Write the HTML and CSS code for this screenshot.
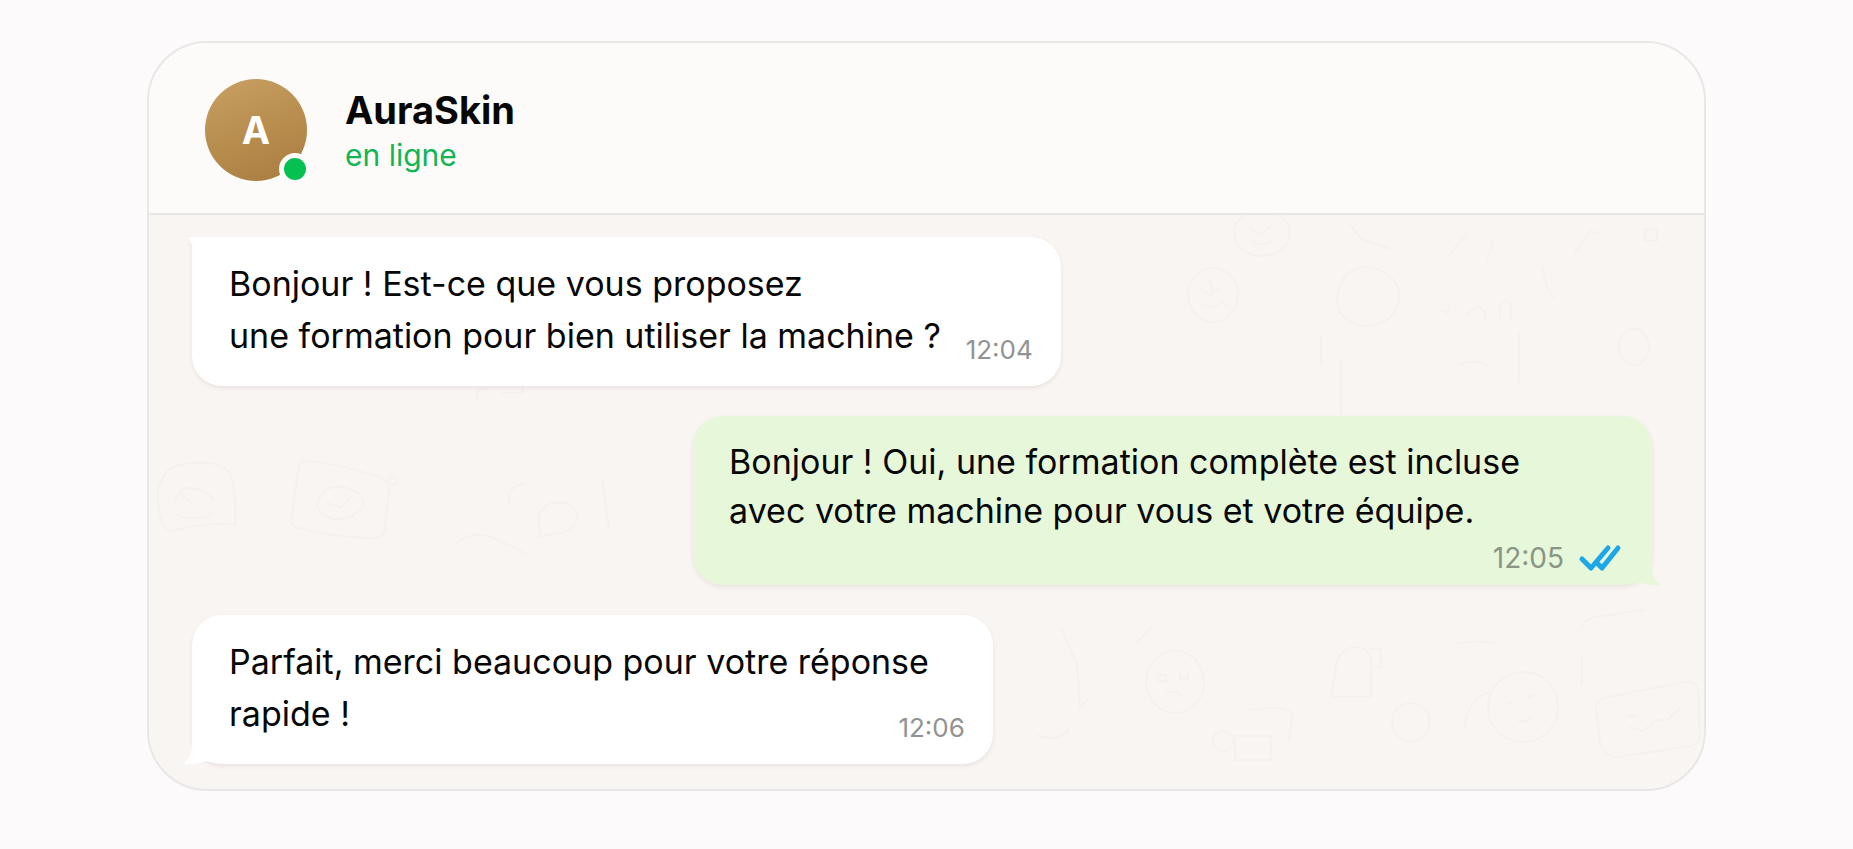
FILE: index.html
```
<!DOCTYPE html>
<html lang="fr">
<head>
    <meta charset="utf-8">
    <meta name="viewport" content="width=device-width, initial-scale=1.0">
    <title>AuraSkin</title>
    <link rel="stylesheet" href="styles.css">
</head>

<body>
    <main class="chat">
        <header class="chat-header">
            <div class="avatar">A<span class="avatar-status"></span></div>
            <div class="contact">
                <h1 class="contact-name">AuraSkin</h1>
                <p class="contact-status">en ligne</p>
            </div>
        </header>

        <section class="messages">
            <!-- wallpaper doodles -->
            <svg class="wallpaper" viewBox="0 0 1555 574" preserveAspectRatio="xMidYMid slice" aria-hidden="true">
                <ellipse cx="1064" cy="80" rx="25" ry="27"/>
                <path d="M1052 74l9 6 12-8M1052 88q10 9 22-2M1060 64l4 12M1072 84l6 8"/>
                <ellipse cx="1113" cy="18" rx="28" ry="23"/>
                <path d="M1100 12l10 8 14-10M1103 26q10 8 22-2"/>
                <path d="M1188 86q2-32 28-34 32 4 34 28 0 28-32 31-28-2-30-25z"/>
                <path d="M1300 40l18-22M1344 26l-6 20M1394 52q2 22 12 32M1425 40l16-24 8 2M1496 14h12v12h-12zM1351 104v-12q6-12 11 0v12"/>
                <path d="M1200 8l12 16 30 10M1290 94l8 4 4-8M1318 100q12-14 18-2v6"/>
                <ellipse cx="1485" cy="132" rx="15" ry="18"/>
                <path d="M1192 145v54M1172 120v30M1370 118v50M1310 150q16-8 30 2"/>
                <path d="M30 250q40-8 52 10 6 22 4 50-30-4-66 7-12-10-11-40 4-24 21-27z"/>
                <path d="M24 290q8-22 20-16 14 0 22 12M28 300q18 8 36-2M30 278l12 10"/>
                <path d="M156 246q30 2 68 14 14 2 16 14l-4 40q-2 10-12 9-34 0-78-11l-4-4 8-58q2-4 6-4z"/>
                <path d="M168 290q4-20 26-18 22 4 20 20-12 14-30 12-14-4-16-14zM178 288l14 4 10-10"/>
                <path d="M392 318q-8-22 10-30 22-4 26 12 0 18-20 18l-18 4zM453 263l7 50M376 268q-22 6-14 22M305 330q20-18 46-4 18 8 28 14"/>
                <path d="M328 184q-2-12 10-10M350 164h24v14h-22M244 262a4 4 0 1 0 .1 0"/>
                <ellipse cx="1026" cy="467" rx="29" ry="31"/>
                <path d="M1009 460h8v6h-8zM1031 458v6h8v-6M1016 479q10-6 16 2"/>
                <path d="M912 412q12 30 16 36l3 44 8-8M888 520q20 8 32-6M986 430l18-20"/>
                <path d="M1074 516a10 10 0 1 0 .1 0M1086 545v-24h36v24zM1100 496q30-8 44 2l-4 28"/>
                <circle cx="1374" cy="492" r="35"/>
                <path d="M1357 490q3-6 8 0M1378 484q6-6 12-2M1368 504q6 6 14-2M1316 513q2-28 24-36"/>
                <path d="M1455 483l80-16q14-2 14 12l2 40q0 10-10 12l-72 11q-14 0-18-14l-4-34q0-9 8-11z"/>
                <path d="M1480 512l14 4 12-10 14-2 12-12M1478 500l10 2"/>
                <path d="M1182 482l6-36q6-14 18-14 14 0 16 14v36zM1220 434h12v18h-8"/>
                <path d="M1432 415q4-14 20-14l44-6M1433 440v30M1305 430q20-6 42-2"/>
                <circle cx="1262" cy="507" r="19"/>
            </svg>

            <article class="bubble bubble-in tail-top">
                <p class="text text-inline">Bonjour ! Est-ce que vous proposez<br>une formation pour bien utiliser la machine ?</p>
                <time class="time">12:04</time>
            </article>

            <article class="bubble bubble-out">
                <p class="text">Bonjour ! Oui, une formation complète est incluse<br>avec votre machine pour vous et votre équipe.</p>
                <div class="meta">
                    <time class="time">12:05</time>
                    <svg class="ticks" viewBox="0 0 40 24" aria-hidden="true">
                        <path d="M2 13l9 9L28 2M17 17l5 5L38 2"/>
                    </svg>
                </div>
                <svg class="tail" viewBox="0 0 38 30" aria-hidden="true">
                    <path d="M28 0v14q1 10 10 15-8 1-17-1-7-3-11-1L0 28V0z"/>
                </svg>
            </article>

            <article class="bubble bubble-in">
                <p class="text">Parfait, merci beaucoup pour votre réponse<br>rapide !</p>
                <time class="time">12:06</time>
                <svg class="tail" viewBox="0 0 38 30" aria-hidden="true">
                    <path d="M10 0v14q-1 10-10 15 9 1 17-1 7-3 11-1l10 1V0z"/>
                </svg>
            </article>
        </section>
    </main>
</body>
</html>
```
FILE: styles.css
```
* {
    box-sizing: border-box;
}

body {
    margin: 0;
    padding: 41px 147px;
    background-color: #fcfafb;
    font-family: Inter, "Liberation Sans", sans-serif;
    color: #070707;
}

h1, p {
    margin: 0;
}

.chat {
    border: 2px solid #e9e7e5;
    border-radius: 60px;
    overflow: hidden;
    background-color: #f9f5f2;
}

.chat-header {
    display: flex;
    align-items: center;
    gap: 38px;
    padding: 36px 56px 32px;
    border-bottom: 2px solid #e9e7e5;
    background-color: #fcfbf9;
}

.avatar {
    position: relative;
    display: flex;
    align-items: center;
    justify-content: center;
    width: 102px;
    height: 102px;
    border-radius: 50%;
    background: linear-gradient(160deg, #c8a062, #b58a4b 60%, #a97c40);
    color: #fff;
    font-size: 38px;
    font-weight: 700;
}

.avatar-status {
    position: absolute;
    right: -4px;
    bottom: -4px;
    width: 32px;
    height: 32px;
    border: 5px solid #fcfbf9;
    border-radius: 50%;
    background-color: #06c152;
}

.contact {
    padding-top: 3px;
}

.contact-name {
    font-size: 38px;
    font-weight: 700;
    line-height: 46px;
}

.contact-status {
    font-size: 30px;
    line-height: 44px;
    color: #12b555;
}

.messages {
    position: relative;
    display: flex;
    flex-direction: column;
    align-items: flex-start;
    gap: 30px;
    padding: 22px 52px 25px 43px;
}

.wallpaper {
    position: absolute;
    inset: 0;
    width: 100%;
    height: 100%;
    fill: none;
    stroke: #f5f1ee;
    stroke-width: 2;
}

.bubble {
    position: relative;
    display: grid;
    border-radius: 30px;
    box-shadow: 0 2px 4px rgba(90, 70, 60, 0.1);
}

.bubble-in {
    padding: 21px 28px 24px 37px;
    background-color: #fff;
}

/* text and time share one cell, the time sits in its bottom right corner */
.bubble-in .text,
.bubble-in .time {
    grid-area: 1 / 1;
}

.bubble-out {
    align-self: flex-end;
    padding: 21px 32px 7px 36px;
    background-color: #e7f7da;
}

.tail-top {
    border-top-left-radius: 0;
}

.tail-top::before {
    content: "";
    position: absolute;
    top: 0;
    left: -4px;
    border-top: 10px solid #fff;
    border-left: 5px solid transparent;
}

.text {
    padding-right: 36px;
    font-size: 34px;
    line-height: 52px;
}

.text-inline {
    padding-right: 92px;
}

.bubble-out .text {
    padding-right: 100px;
    line-height: 49px;
}

.time {
    align-self: end;
    justify-self: end;
    font-size: 26px;
    line-height: 24px;
    color: #929292;
}

.meta {
    display: flex;
    align-items: center;
    justify-self: end;
    gap: 16px;
    padding-top: 3px;
}

.meta .time {
    font-size: 28px;
    line-height: 40px;
    color: #8b9585;
}

.ticks {
    width: 40px;
    height: 24px;
    overflow: visible;
    fill: none;
    stroke: #1ba7e8;
    stroke-width: 5;
    stroke-linecap: round;
    stroke-linejoin: round;
}

.tail {
    position: absolute;
    bottom: -1px;
    width: 38px;
    height: 30px;
}

.bubble-in .tail {
    left: -10px;
    fill: #fff;
}

.bubble-out .tail {
    right: -10px;
    fill: #e7f7da;
}
```
